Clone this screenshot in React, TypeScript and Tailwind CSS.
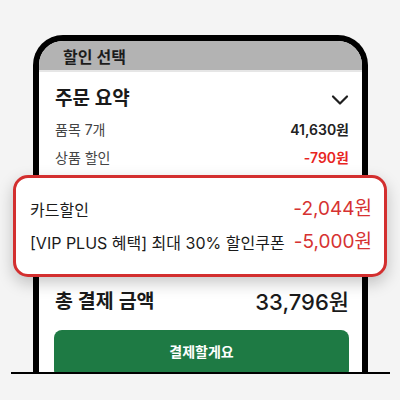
const FONT = "font-['Inter','Noto_Sans_CJK_KR',sans-serif]"

function Chevron() {
  return (
    <svg width="18" height="12" viewBox="0 0 18 12" fill="none">
      <path d="M2 2.5 L9 9.5 L16 2.5" stroke="#1f1f1f" strokeWidth="2.2" strokeLinecap="round" strokeLinejoin="round" />
    </svg>
  )
}

export default function App() {
  return (
    <div className={`relative w-[400px] h-[400px] bg-[#f4f4f4] overflow-hidden ${FONT}`}>
      <div className="pt-[35px]">
        {/* phone body */}
        <div className="ml-[33px] w-[335px] h-[337px] border-[6px] border-b-0 border-black rounded-t-[30px] bg-white overflow-hidden">
          <div className="h-[29px] bg-[#b3b3b3] flex items-center pl-[24px] pt-[3px] text-[16px] font-semibold text-[#1c1c1c]">
            할인 선택
          </div>
          <div className="h-[2px] bg-[#e6e6e6]" />
          <div className="pl-[16px] pr-[13px]">
            <div className="mt-[12px] h-[30px] flex items-center justify-between">
              <span className="text-[19px] font-semibold text-[#1a1a1a]">주문 요약</span>
              <span className="mt-[1px]"><Chevron /></span>
            </div>
            <div className="mt-[4px] h-[22px] flex items-center justify-between">
              <span className="text-[14px] text-[#444]">품목 7개</span>
              <span className="text-[14px] font-semibold text-[#222]">41,630원</span>
            </div>
            <div className="mt-[6px] h-[22px] flex items-center justify-between">
              <span className="text-[14px] text-[#444]">상품 할인</span>
              <span className="text-[14px] font-semibold text-[#e8251f]">-790원</span>
            </div>
            <div className="mt-[119px] h-[30px] flex items-center justify-between">
              <span className="text-[19.5px] font-semibold text-[#1a1a1a]">총 결제 금액</span>
              <span className="text-[22px] font-medium text-[#1a1a1a]">33,796원</span>
            </div>
            <div className="mt-[13px] -ml-[1px] h-[48px] rounded-[8px] bg-[#1e7a44] flex justify-center pt-[11px]">
              <span className="text-[14px] font-bold text-white">결제할게요</span>
            </div>
          </div>
        </div>
        <div className="ml-[11px] w-[379px] h-[2px] bg-black" />
      </div>

      {/* highlighted discount card */}
      <div className="absolute left-[13px] top-[175px] w-[374px] h-[102px] rounded-[15px] border-[3px] border-[#d32f2f] bg-white shadow-[0_6px_16px_rgba(0,0,0,0.22)] pl-[14px] pr-[12px] flex flex-col justify-center gap-[9px]">
        <div className="h-[24px] flex items-center justify-between">
          <span className="text-[16px] text-[#1a1a1a]">카드할인</span>
          <span className="text-[19px] text-[#d63232]">-2,044원</span>
        </div>
        <div className="h-[24px] flex items-center justify-between">
          <span className="text-[16px] text-[#1a1a1a]">[VIP PLUS 혜택] 최대 30% 할인쿠폰</span>
          <span className="text-[19px] text-[#d63232]">-5,000원</span>
        </div>
      </div>
    </div>
  )
}
